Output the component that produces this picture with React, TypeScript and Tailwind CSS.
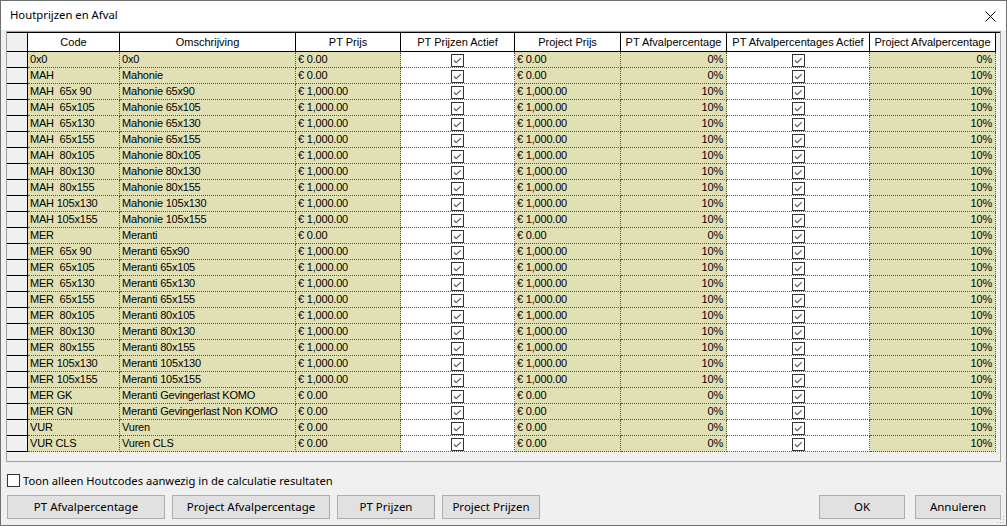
import React from "react";

type Row = {
  code: string;
  desc: string;
  pt: string;
  proj: string;
  ptAf: string;
  projAf: string;
};

const sizes = ["65x 90", "65x105", "65x130", "65x155", "80x105", "80x130", "80x155", "105x130", "105x155"];

function sizeRows(prefix: string, name: string): Row[] {
  return sizes.map((s) => {
    const code = s.length === 6 ? `${prefix}  ${s}` : `${prefix} ${s}`;
    return {
      code,
      desc: `${name} ${s.replace(" ", "")}`,
      pt: "€ 1,000.00",
      proj: "€ 1,000.00",
      ptAf: "10%",
      projAf: "10%",
    };
  });
}

const rows: Row[] = [
  { code: "0x0", desc: "0x0", pt: "€ 0.00", proj: "€ 0.00", ptAf: "0%", projAf: "0%" },
  { code: "MAH", desc: "Mahonie", pt: "€ 0.00", proj: "€ 0.00", ptAf: "0%", projAf: "10%" },
  ...sizeRows("MAH", "Mahonie"),
  { code: "MER", desc: "Meranti", pt: "€ 0.00", proj: "€ 0.00", ptAf: "0%", projAf: "10%" },
  ...sizeRows("MER", "Meranti"),
  { code: "MER GK", desc: "Meranti Gevingerlast KOMO", pt: "€ 0.00", proj: "€ 0.00", ptAf: "0%", projAf: "10%" },
  { code: "MER GN", desc: "Meranti Gevingerlast Non KOMO", pt: "€ 0.00", proj: "€ 0.00", ptAf: "0%", projAf: "10%" },
  { code: "VUR", desc: "Vuren", pt: "€ 0.00", proj: "€ 0.00", ptAf: "0%", projAf: "10%" },
  { code: "VUR CLS", desc: "Vuren CLS", pt: "€ 0.00", proj: "€ 0.00", ptAf: "0%", projAf: "10%" },
];

const headers = [
  { label: "Code", w: "w-[92px]" },
  { label: "Omschrijving", w: "w-[176px]" },
  { label: "PT Prijs", w: "w-[105px]" },
  { label: "PT Prijzen Actief", w: "w-[114px]" },
  { label: "Project Prijs", w: "w-[106px]" },
  { label: "PT Afvalpercentage", w: "w-[106px]" },
  { label: "PT Afvalpercentages Actief", w: "w-[143px]" },
  { label: "Project Afvalpercentage", w: "w-[126px]" },
];

function CheckBox() {
  return (
    <div className="w-[13px] h-[13px] border border-[#333333] bg-white flex items-center justify-center mt-[2px]">
      <svg width="11" height="11" viewBox="0 0 11 11">
        <path d="M2 5.5 L4.2 7.7 L8.8 3.1" stroke="#5a5a5a" strokeWidth="1.2" fill="none" />
      </svg>
    </div>
  );
}

const cell =
  "h-full border-r border-b border-dotted border-r-[#555555] border-b-[#555555] flex items-center whitespace-pre overflow-hidden tracking-[-0.2px]";
const khaki = "bg-[#e1e0b4]";

function DataRow({ r }: { r: Row }) {
  return (
    <div className="flex h-[16px]">
      <div className="w-[21px] h-full border-r border-b border-black bg-[#f0f0f0]" />
      <div className={`w-[92px] pl-[2px] ${cell} ${khaki}`}>{r.code}</div>
      <div className={`w-[176px] pl-[2px] ${cell} ${khaki}`}>{r.desc}</div>
      <div className={`w-[105px] pl-[2px] ${cell} ${khaki}`}>{r.pt}</div>
      <div className={`w-[114px] justify-center ${cell} bg-white`}>
        <CheckBox />
      </div>
      <div className={`w-[106px] pl-[2px] ${cell} ${khaki}`}>{r.proj}</div>
      <div className={`w-[106px] justify-end pr-[3px] ${cell} ${khaki}`}>{r.ptAf}</div>
      <div className={`w-[143px] justify-center ${cell} bg-white`}>
        <CheckBox />
      </div>
      <div className={`w-[126px] justify-end pr-[3px] ${cell} ${khaki}`}>{r.projAf}</div>
    </div>
  );
}

function Btn({ label, w }: { label: string; w: string }) {
  return (
    <div className={`${w} h-[24px] bg-[#e1e1e1] border border-[#adadad] flex items-center justify-center text-[11.5px] text-black`}>
      {label}
    </div>
  );
}

export default function App() {
  return (
    <div
      className="relative w-[1007px] h-[526px] border border-[#6f6f6f] bg-[#f0f0f0] flex flex-col overflow-hidden"
      style={{ fontFamily: '"Noto Sans", "Open Sans", sans-serif' }}
    >
      <div className="h-[29px] bg-white flex items-center justify-between pl-[9px] pr-[10px] shrink-0">
        <span className="text-[11.3px] text-black">Houtprijzen en Afval</span>
        <svg width="11" height="11" viewBox="0 0 11 11" className="mt-[1px]">
          <path d="M0.5 0.5 L10.5 10.5 M10.5 0.5 L0.5 10.5" stroke="#000" strokeWidth="1" />
        </svg>
      </div>
      <div className="flex flex-col px-[5px] pt-[1px]">
        <div
          className="w-[995px] h-[431px] border border-[#a0a0a0] bg-[#f0f0f0] flex flex-col text-[11px] text-black"
          style={{ fontFamily: '"Liberation Sans", Arial, sans-serif' }}
        >
          <div className="flex h-[20px] border-t border-black">
            <div className="w-[21px] h-full border-r border-b border-black bg-[#f0f0f0]" />
            {headers.map((h) => (
              <div
                key={h.label}
                className={`${h.w} h-full border-r border-b border-black bg-white flex items-center justify-center whitespace-nowrap overflow-hidden`}
              >
                {h.label}
              </div>
            ))}
          </div>
          {rows.map((r, i) => (
            <DataRow key={i} r={r} />
          ))}
        </div>
        <div className="flex items-center h-[13px] mt-[12px] ml-[1px] gap-[3px]">
          <div className="w-[13px] h-[13px] border border-[#333333] bg-white" />
          <span className="text-[11.2px] text-black leading-none">
            Toon alleen Houtcodes aanwezig in de calculatie resultaten
          </span>
        </div>
        <div className="flex items-center mt-[8px] ml-[1px]">
          <div className="flex gap-[7px]">
            <Btn label="PT Afvalpercentage" w="w-[158px]" />
            <Btn label="Project Afvalpercentage" w="w-[158px]" />
            <Btn label="PT Prijzen" w="w-[98px]" />
            <Btn label="Project Prijzen" w="w-[98px]" />
          </div>
          <div className="ml-auto flex gap-[10px] mr-[0px]">
            <Btn label="OK" w="w-[86px]" />
            <Btn label="Annuleren" w="w-[86px]" />
          </div>
        </div>
      </div>
      <svg width="8" height="8" viewBox="0 0 8 8" className="absolute right-[1px] bottom-[1px]">
        <rect x="6" y="0" width="1" height="1" fill="#b8b8b8" />
        <rect x="3" y="3" width="1" height="1" fill="#b8b8b8" />
        <rect x="6" y="3" width="1" height="1" fill="#b8b8b8" />
        <rect x="0" y="6" width="1" height="1" fill="#b8b8b8" />
        <rect x="3" y="6" width="1" height="1" fill="#b8b8b8" />
        <rect x="6" y="6" width="1" height="1" fill="#b8b8b8" />
      </svg>
    </div>
  );
}
